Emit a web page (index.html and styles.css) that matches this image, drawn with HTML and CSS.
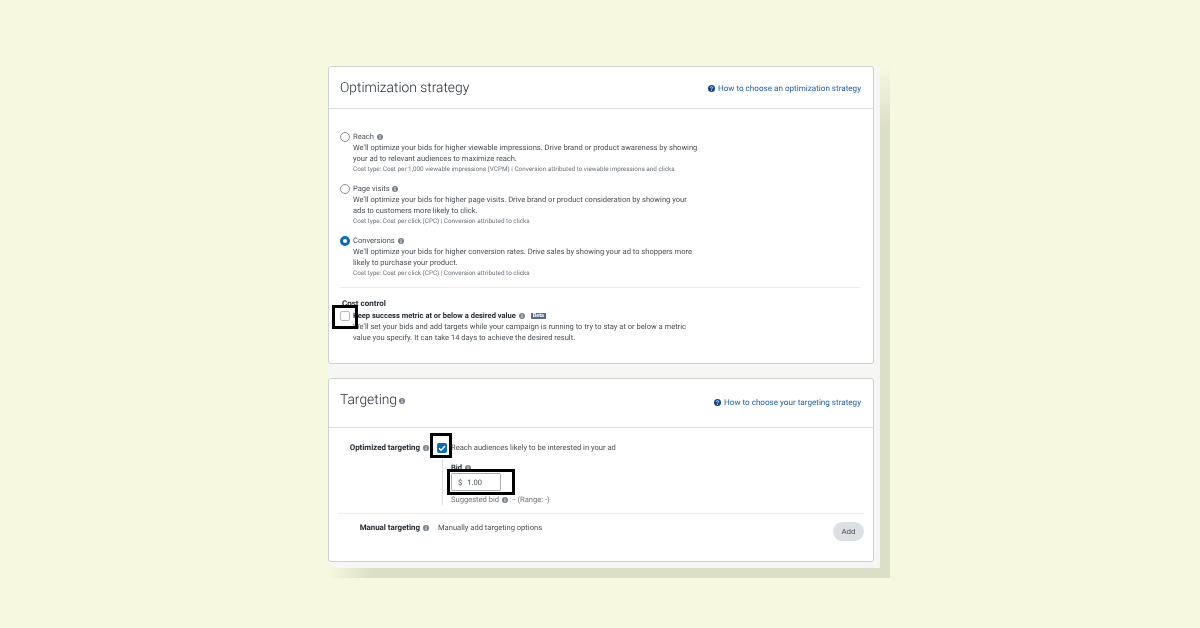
FILE: index.html
```html
<!DOCTYPE html>
<html lang="en">
<head>
  <meta charset="UTF-8" />
  <title>Campaign settings</title>
  <link rel="stylesheet" href="styles.css">
</head>
<body>
  <svg class="icon-defs" width="0" height="0">
    <symbol id="info" viewBox="0 0 12 12">
      <circle cx="6" cy="6" r="6" fill="currentColor"/>
      <rect x="5" y="5" width="2" height="4.5" fill="#fff"/>
      <rect x="5" y="2.5" width="2" height="1.6" fill="#fff"/>
    </symbol>
    <symbol id="help" viewBox="0 0 12 12">
      <circle cx="6" cy="6" r="6" fill="currentColor"/>
      <path d="M4 4.6C4 3.4 4.9 2.8 6 2.8s2 .6 2 1.7c0 1.5-2 1.4-2 3" fill="none" stroke="#fff" stroke-width="1.4"/>
      <rect x="5.2" y="8.3" width="1.6" height="1.5" fill="#fff"/>
    </symbol>
  </svg>

  <div class="frame">
    <!-- Optimization strategy -->
    <section class="card card-strategy">
      <header class="card-head strategy-head">
        <h2>Optimization strategy</h2>
        <a class="help-link" href="#"><svg class="icon-help"><use href="#help"/></svg>How to choose an optimization strategy</a>
      </header>
      <div class="card-body strategy-body">
        <div class="option">
          <span class="radio"></span>
          <div>
            <div class="option-title">Reach <svg class="icon-info"><use href="#info"/></svg></div>
            <p class="desc">We'll optimize your bids for higher viewable impressions. Drive brand or product awareness by showing<br>your ad to relevant audiences to maximize reach.</p>
            <p class="cost">Cost type: Cost per 1,000 viewable impressions (VCPM) | Conversion attributed to viewable impressions and clicks</p>
          </div>
        </div>
        <div class="option">
          <span class="radio"></span>
          <div>
            <div class="option-title">Page visits <svg class="icon-info"><use href="#info"/></svg></div>
            <p class="desc">We'll optimize your bids for higher page visits. Drive brand or product consideration by showing your<br>ads to customers more likely to click.</p>
            <p class="cost">Cost type: Cost per click (CPC) | Conversion attributed to clicks</p>
          </div>
        </div>
        <div class="option">
          <span class="radio radio-on"></span>
          <div>
            <div class="option-title">Conversions <svg class="icon-info"><use href="#info"/></svg></div>
            <p class="desc">We'll optimize your bids for higher conversion rates. Drive sales by showing your ad to shoppers more<br>likely to purchase your product.</p>
            <p class="cost">Cost type: Cost per click (CPC) | Conversion attributed to clicks</p>
          </div>
        </div>
        <hr class="divider">
        <h3 class="cost-title">Cost control</h3>
        <div class="option cost-option">
          <span class="checkbox"></span>
          <div>
            <div class="option-title strong">Keep success metric at or below a desired value <svg class="icon-info"><use href="#info"/></svg><span class="beta">Beta</span></div>
            <p class="desc">We'll set your bids and add targets while your campaign is running to try to stay at or below a metric<br>value you specify. It can take 14 days to achieve the desired result.</p>
          </div>
          <span class="mark mark-cost"></span>
        </div>
      </div>
    </section>

    <!-- Targeting -->
    <section class="card card-targeting">
      <header class="card-head targeting-head">
        <h2>Targeting <svg class="icon-info icon-title"><use href="#info"/></svg></h2>
        <a class="help-link" href="#"><svg class="icon-help"><use href="#help"/></svg>How to choose your targeting strategy</a>
      </header>
      <div class="card-body targeting-body">
        <div class="target-row optimized">
          <div class="target-label">Optimized targeting <svg class="icon-info"><use href="#info"/></svg></div>
          <div class="target-check">
            <span class="checkbox checkbox-on">
              <svg viewBox="0 0 10 10"><path d="M2 5.2l2.1 2L8 3" fill="none" stroke="#fff" stroke-width="1.5"/></svg>
            </span>
            <span>Reach audiences likely to be interested in your ad</span>
            <span class="mark mark-check"></span>
          </div>
        </div>
        <div class="bid-block">
          <div class="bid-title">Bid <svg class="icon-info"><use href="#info"/></svg></div>
          <div class="bid-field">
            <div class="bid-input"><span>$</span><span>1.00</span></div>
            <span class="mark mark-bid"></span>
          </div>
          <div class="bid-hint">Suggested bid <svg class="icon-info"><use href="#info"/></svg> : - (Range: -)</div>
        </div>
        <hr class="divider target-divider">
        <div class="target-row manual">
          <div class="target-label">Manual targeting <svg class="icon-info"><use href="#info"/></svg></div>
          <div class="manual-text">Manually add targeting options</div>
          <button type="button" class="add-btn">Add</button>
        </div>
      </div>
    </section>
  </div>
</body>
</html>
```

FILE: styles.css
```css
:root {
  --page-bg: #f6f9de;
  --frame-bg: #f6f6f4;
  --frame-shadow: #dcdfc7;
  --border: #cfd2d2;
  --line: #e6e7e7;
  --text: #4a5055;
  --text-dark: #232b32;
  --muted: #6b7278;
  --link: #1f5a9e;
  --blue: #0f6cb0;
  --icon: #79808a;
}

* {
  box-sizing: border-box;
}

html,
body {
  height: 100%;
}

body {
  margin: 0;
  padding: 66px 0 0 328px;
  background-color: var(--page-bg);
  font-family: Roboto, "Noto Sans", sans-serif;
  font-size: 7.57px;
  line-height: 11px;
  color: var(--text);
  overflow: hidden;
  text-rendering: geometricPrecision;
}

.icon-defs {
  display: block;
  height: 0;
}

.frame {
  position: relative;
  width: 552px;
  height: 502px;
  padding: 0 6px 7px 0;
  background-color: var(--frame-bg);
  border-radius: 0 0 8px 0;
  will-change: transform;
}

/* soft offset shadow, fades out at its two far ends */
.frame::before {
  content: "";
  position: absolute;
  left: 100%;
  top: 0;
  width: 10px;
  height: calc(100% + 10px);
  background: linear-gradient(to bottom, var(--page-bg), var(--frame-shadow) 12%);
}

.frame::after {
  content: "";
  position: absolute;
  left: 0;
  top: 100%;
  width: 100%;
  height: 10px;
  background: linear-gradient(to right, var(--page-bg), var(--frame-shadow) 8%);
}

.card {
  background-color: white;
  border: 1px solid var(--border);
  border-radius: 3px;
}

.card-strategy {
  height: 298px;
  margin-bottom: 14px;
}

.card-targeting {
  height: 184px;
}

.card-head {
  display: flex;
  justify-content: space-between;
  border-bottom: 1px solid #dcdddd;
  padding: 0 12px 0 11px;
}

.strategy-head {
  height: 42px;
  padding-top: 1px;
  align-items: center;
}

.targeting-head {
  height: 49px;
  padding-top: 11px;
  align-items: flex-start;
}

h2 {
  margin: 0;
  font-size: 13.8px;
  line-height: 20px;
  font-weight: 300;
  color: var(--text-dark);
}

.help-link {
  color: var(--link);
  text-decoration: none;
  font-size: 8.1px;
  display: flex;
  align-items: center;
}

.targeting-head .help-link {
  line-height: 24px;
}

.icon-help {
  width: 7px;
  height: 7px;
  margin-right: 3px;
  color: #12458c;
}

.icon-info {
  width: 6px;
  height: 6px;
  margin-left: 1px;
  color: var(--icon);
  vertical-align: -1px;
}

h2 .icon-title {
  margin-left: -1px;
  vertical-align: 0;
}

.strategy-body {
  padding: 22px 11px 0;
}

.option {
  display: flex;
  gap: 3px;
  margin-bottom: 9px;
  position: relative;
}

.radio {
  flex: none;
  width: 10px;
  height: 10px;
  margin-top: 1px;
  border: 1px solid #8d9296;
  border-radius: 50%;
  background-color: white;
}

.radio-on {
  border: 3px solid var(--blue);
}

.option-title {
  color: var(--text);
}

.desc,
.cost {
  margin: 0;
}

.cost {
  font-size: 6.35px;
  line-height: 10px;
  color: var(--muted);
}

.divider {
  border: none;
  border-top: 1px solid #eeeeec;
  margin: 0 2px 12px 0;
}

.cost-title {
  margin: -2px 0 0 2px;
  font-size: 8px;
  line-height: 12px;
  font-weight: 700;
  color: var(--text-dark);
}

.cost-option {
  margin: 0;
}

.checkbox {
  flex: none;
  width: 10px;
  height: 10px;
  margin-top: 1px;
  border: 1px solid #b4b8bb;
  border-radius: 2px;
  background-color: white;
}

.checkbox-on {
  border: none;
  background-color: var(--blue);
  display: flex;
}

.strong {
  font-weight: 700;
  color: var(--text-dark);
  font-size: 7.55px;
}

.beta {
  display: inline-block;
  margin-left: 6px;
  padding: 0 2px;
  background-color: #5a6b8c;
  color: white;
  font-size: 5.5px;
  line-height: 6px;
  vertical-align: 1px;
}

/* black highlight boxes drawn over the controls */
.mark {
  position: absolute;
  border: 3px solid #000;
  pointer-events: none;
}

.mark-cost {
  left: -8px;
  top: -5px;
  width: 26px;
  height: 24px;
}

.mark-check {
  left: -7px;
  top: -9px;
  width: 22px;
  height: 25px;
}

.mark-bid {
  left: -4px;
  top: -4px;
  width: 68px;
  height: 26px;
}

.targeting-body {
  padding-top: 14px;
}

.target-row {
  display: flex;
}

.target-label {
  flex: none;
  width: 100px;
  font-size: 7.9px;
  font-weight: 700;
  text-align: right;
  color: var(--text-dark);
}

.target-check {
  display: flex;
  gap: 4px;
  margin-left: 8px;
  position: relative;
}

.bid-block {
  margin: 4px 0 8px 113px;
  padding: 5px 0 0 8px;
  border-left: 1px solid #dedfdf;
  height: 48px;
}

.bid-title {
  font-weight: 700;
  color: var(--text-dark);
}

.bid-field {
  position: relative;
  width: 50px;
}

.bid-input {
  display: flex;
  gap: 5px;
  height: 18px;
  align-items: center;
  padding-left: 6px;
  border: 1px solid #a9adb0;
  border-radius: 2px;
  background-color: white;
}

.bid-hint {
  margin-top: 3px;
  color: var(--muted);
}

.target-divider {
  margin: 0 9px 8px 9px;
}

.manual {
  align-items: flex-start;
}

.manual-text {
  margin-left: 9px;
  flex: 1;
}

.add-btn {
  margin: 0 9px 0 0;
  width: 31px;
  height: 19px;
  border: none;
  border-radius: 10px;
  background-color: #dcdfe3;
  color: var(--text);
  font-family: inherit;
  font-size: 8px;
  padding: 0;
}
```
